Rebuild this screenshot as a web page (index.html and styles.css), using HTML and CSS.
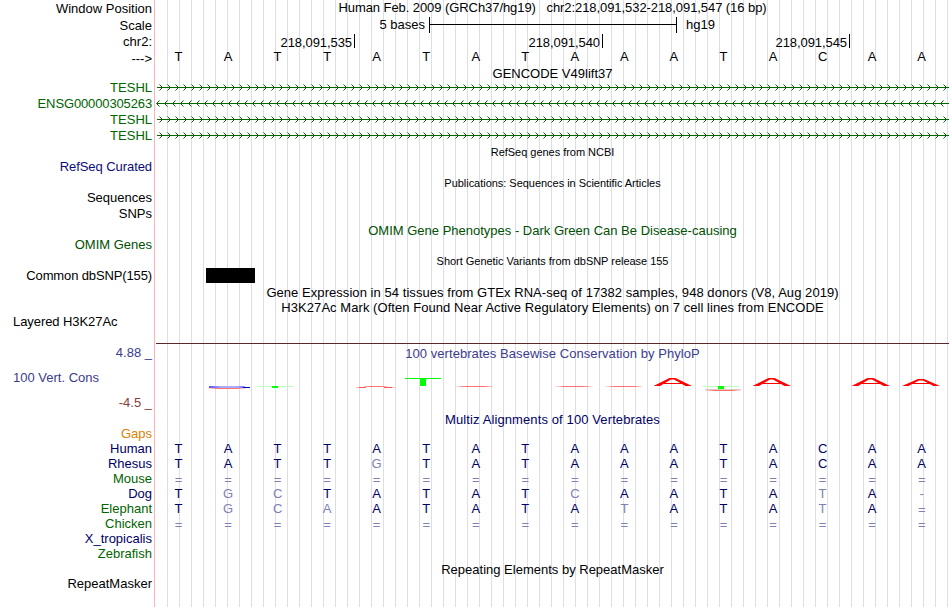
FILE: index.html
```html
<!DOCTYPE html>
<html lang="en">
<head>
<meta charset="utf-8">
<title>Genome Browser hg19 chr2:218,091,532-218,091,547</title>
<link rel="stylesheet" href="styles.css">
</head>
<body>
<main class="browser">
  <div class="row h17"><span class="label">Window Position</span><span class="title raised tight">Human Feb. 2009 (GRCh37/hg19) &nbsp; chr2:218,091,532-218,091,547 (16 bp)</span></div>
  <div class="row h17"><span class="label">Scale</span><div class="scale"><span class="scale-text">5 bases</span><span class="scale-bar"></span><span>hg19</span></div></div>
  <div class="row h16"><span class="label">chr2:</span><div class="ruler tight"><span>218,091,535</span><span>218,091,540</span><span>218,091,545</span></div></div>
  <div class="row h15"><span class="label arrow">---&gt;</span><div class="bases" data-seq="TATTATATAAATACAA"></div></div>
  <div class="row h17"><span class="label"></span><span class="title">GENCODE V49lift37</span></div>
  <div class="row h14 gene"><span class="label">TESHL</span><div class="strand" data-dir="1"></div></div>
  <div class="row h16 gene"><span class="label tighter">ENSG00000305263</span><div class="strand" data-dir="-1"></div></div>
  <div class="row h16 gene"><span class="label">TESHL</span><div class="strand" data-dir="1"></div></div>
  <div class="row h16 gene"><span class="label">TESHL</span><div class="strand" data-dir="1"></div></div>
  <div class="row h16"><span class="label"></span><span class="title small">RefSeq genes from NCBI</span></div>
  <div class="row h15"><span class="label blue tight">RefSeq Curated</span></div>
  <div class="row h16"><span class="label"></span><span class="title small">Publications: Sequences in Scientific Articles</span></div>
  <div class="row h15"><span class="label">Sequences</span></div>
  <div class="row h16"><span class="label">SNPs</span></div>
  <div class="row h17"><span class="label"></span><span class="title omim">OMIM Gene Phenotypes - Dark Green Can Be Disease-causing</span></div>
  <div class="row h14"><span class="label omim">OMIM Genes</span></div>
  <div class="row h16"><span class="label"></span><span class="title small">Short Genetic Variants from dbSNP release 155</span></div>
  <div class="row h15"><span class="label tighter">Common dbSNP(155)</span><div class="variants"><span class="variant"></span></div></div>
  <div class="row h17"><span class="label"></span><span class="title loose">Gene Expression in 54 tissues from GTEx RNA-seq of 17382 samples, 948 donors (V8, Aug 2019)</span></div>
  <div class="row h15"><span class="label"></span><span class="title loose">H3K27Ac Mark (Often Found Near Active Regulatory Elements) on 7 cell lines from ENCODE</span></div>
  <div class="row h14"><span class="label left tight">Layered H3K27Ac</span></div>
  <div class="row h14"><span class="label"></span><div class="baseline"></div></div>
  <div class="row h18 cons"><span class="label raised">4.88 _</span><span class="title loose">100 vertebrates Basewise Conservation by PhyloP</span></div>
  <div class="row h49 cons">
    <div class="cons-labels"><span class="label left">100 Vert. Cons</span><span class="label low">-4.5 _</span></div>
    <svg class="signal" viewBox="156 362 793 49" width="793" height="49">
      <defs>
        <linearGradient id="fade"><stop offset="0" stop-color="#f44" stop-opacity=".1"/><stop offset=".25" stop-color="#f44" stop-opacity=".75"/><stop offset=".75" stop-color="#f44" stop-opacity=".75"/><stop offset="1" stop-color="#f44" stop-opacity=".1"/></linearGradient>
        <linearGradient id="blue"><stop offset="0" stop-color="#55f"/><stop offset=".3" stop-color="#aaf"/><stop offset=".7" stop-color="#aaf"/><stop offset="1" stop-color="#44f"/></linearGradient>
        <path id="peak" fill="#f00" d="M653.5 386 669.5 378H675.5L692 386H685.5L674 379.5H671L660 386Z"/>
      </defs>
      <path fill="url(#blue)" d="M209 386H243L249 388H209Z"/>
      <path fill="#00c" d="M243 387h7v1h-7z"/>
      <path fill="url(#fade)" d="M208 388h38v1h-38z"/>
      <path fill="#bfb" d="M257 386h36v1h-36z"/><path fill="#0f0" d="M272 386h6v2h-6z"/>
      <path fill="url(#fade)" d="M363 386h25v1h-25z"/><path fill="#f55" d="M359 387h7v1h-7zM384 387h8v1h-8z"/><path fill="#fbb" d="M356 387h3v1h-3zM392 387h3v1h-3z"/>
      <path fill="#0f0" d="M405 378h36v1h-36zM420 378h6v8h-6z"/>
      <path fill="url(#fade)" d="M456 386h38v1h-38z"/>
      <path fill="url(#fade)" d="M555 386h38v1h-38z"/>
      <path fill="url(#fade)" d="M605 386h38v1h-38z"/>
      <use href="#peak"/><path fill="#f00" d="M664 383h18v1h-18z"/>
      <path fill="#bfb" d="M703 386h36v1h-36z"/><path fill="#dcb" d="M705 389h36v1h-36z"/><path fill="#0f0" d="M718 386h6v3h-6z"/><path fill="url(#fade)" d="M705 390h36v1h-36z"/>
      <use href="#peak" x="99"/><path fill="#f00" d="M763 383h18v1h-18z"/>
      <use href="#peak" x="198"/><path fill="#f00" d="M862 383h18v1h-18z"/>
      <path fill="#f00" d="M902 386 918 379H924L940 386H933.5L923 380.5H919L908.5 386Z"/><path fill="#f00" d="M911 383h19v1h-19z"/>
    </svg>
  </div>
  <div class="row h17 navy"><span class="label"></span><span class="title looser">Multiz Alignments of 100 Vertebrates</span></div>
  <div class="row h14"><span class="label gaps">Gaps</span></div>
  <div class="row h15 navy"><span class="label">Human</span><div class="bases" data-seq="TATTATATAAATACAA"></div></div>
  <div class="row h15 navy"><span class="label">Rhesus</span><div class="bases" data-seq="TATTgTATAAATACAA"></div></div>
  <div class="row h15 navy"><span class="label green">Mouse</span><div class="bases" data-seq="================"></div></div>
  <div class="row h15 navy"><span class="label">Dog</span><div class="bases" data-seq="TgcTATATcAATAtA-"></div></div>
  <div class="row h15 navy"><span class="label green">Elephant</span><div class="bases" data-seq="TgcaATATAtATAtA="></div></div>
  <div class="row h15 navy"><span class="label green">Chicken</span><div class="bases" data-seq="================"></div></div>
  <div class="row h15 navy"><span class="label">X_tropicalis</span></div>
  <div class="row h15 navy"><span class="label green">Zebrafish</span></div>
  <div class="row h16"><span class="label"></span><span class="title">Repeating Elements by RepeatMasker</span></div>
  <div class="row h14"><span class="label">RepeatMasker</span></div>
</main>
<script src="tracks.js"></script>
</body>
</html>
```
FILE: styles.css
```css
body {
  margin: 0;
  background: #fff;
  font: 13px/16px "Liberation Sans", Arial, sans-serif;
  color: #000;
}
.browser {
  box-sizing: border-box;
  width: 949px;
  height: 607px;
  overflow: hidden;
  background:
    linear-gradient(#ffb4b4, #ffb4b4) 154px 0 / 1px 100% no-repeat,
    repeating-linear-gradient(90deg, #dcdcf5 0 1px, transparent 1px 12px) 167px 0 / 948px 100% no-repeat;
}
.row {
  display: grid;
  grid-template-columns: 152px 793px;
  column-gap: 4px;
  align-items: end;
  white-space: nowrap;
}
.h14 { height: 14px; grid-template-rows: 14px; }
.h15 { height: 15px; grid-template-rows: 15px; }
.h16 { height: 16px; grid-template-rows: 16px; }
.h17 { height: 17px; grid-template-rows: 17px; }
.h18 { height: 18px; grid-template-rows: 18px; }
.h49 { height: 49px; grid-template-rows: 49px; }
.label { text-align: right; min-height: 1px; }
.left { text-align: left; padding-left: 13px; }
.title { text-align: center; }
.small { font-size: 11px; letter-spacing: -0.03px; }
.tight { letter-spacing: -0.07px; }
.tighter { letter-spacing: -0.13px; }
.loose { letter-spacing: 0.055px; }
.looser { letter-spacing: 0.11px; }
.raised { padding-bottom: 1px; }
.arrow { margin-bottom: -2px; }
.gene, .green { color: #006400; }
.navy { color: #000064; }
.navy .green { color: #006400; }
.blue { color: #0c0c78; }
.omim { color: #005000; }
.gaps { color: #e08000; }
.cons { color: #3c3c8c; }
.low { color: #8c3c3c; }

.scale { display: flex; height: 17px; line-height: 15px; }
.scale-text { width: 269px; margin-right: 4px; text-align: right; }
.scale-bar {
  box-sizing: border-box;
  width: 248px;
  height: 16px;
  margin-right: 9px;
  border: solid #000;
  border-width: 0 1px;
  background: linear-gradient(#000, #000) 0 7px / 100% 1px no-repeat;
}
.ruler {
  display: grid;
  grid-template-columns: 199px 248px 247px;
  height: 16px;
}
.ruler span {
  height: 14px;
  padding-right: 2px;
  border-right: 1px solid #000;
  line-height: 18px;
  text-align: right;
}
.bases {
  display: grid;
  grid-template-columns: repeat(16, 49.56px);
  margin-left: -2.3px;
  text-align: center;
}
.mismatch { color: #8080b4; }
.gap { height: 15px; padding-top: 1px; }
.strand { height: 14px; }
.strand svg { display: block; }
.variants { display: flex; height: 15px; margin-bottom: 1px; padding-left: 50px; }
.variant { width: 49px; background: #000; }
.baseline { border-bottom: 1px solid #5a2828; }
.cons-labels {
  display: grid;
  grid-template-rows: 24px 25px;
  align-items: end;
}
.signal { display: block; }
```
FILE: tracks.js
```js
// One cell per base; lower case and gap symbols are drawn faded.
document.querySelectorAll('.bases').forEach(function (row) {
  for (const ch of row.dataset.seq) {
    const cell = document.createElement('span');
    cell.textContent = ch.toUpperCase();
    if (!/[A-Z]/.test(ch)) cell.className = 'mismatch';
    if (ch === '=') cell.classList.add('gap');
    row.append(cell);
  }
});

// Intron line with a chevron every 8 pixels.
document.querySelectorAll('.strand').forEach(function (row) {
  const forward = row.dataset.dir === '1';
  let d = '';
  for (let x = forward ? 6.5 : 0.5; x < 796; x += 8) {
    const tail = forward ? x - 3 : x + 3;
    d += 'M' + tail + ' 2.5L' + x + ' 5.5L' + tail + ' 8.5';
  }
  row.innerHTML = '<svg width="793" height="14" fill="none" stroke="#006400">' +
    '<path d="M1 5.5H793"/><path d="' + d + '"/></svg>';
});
```
